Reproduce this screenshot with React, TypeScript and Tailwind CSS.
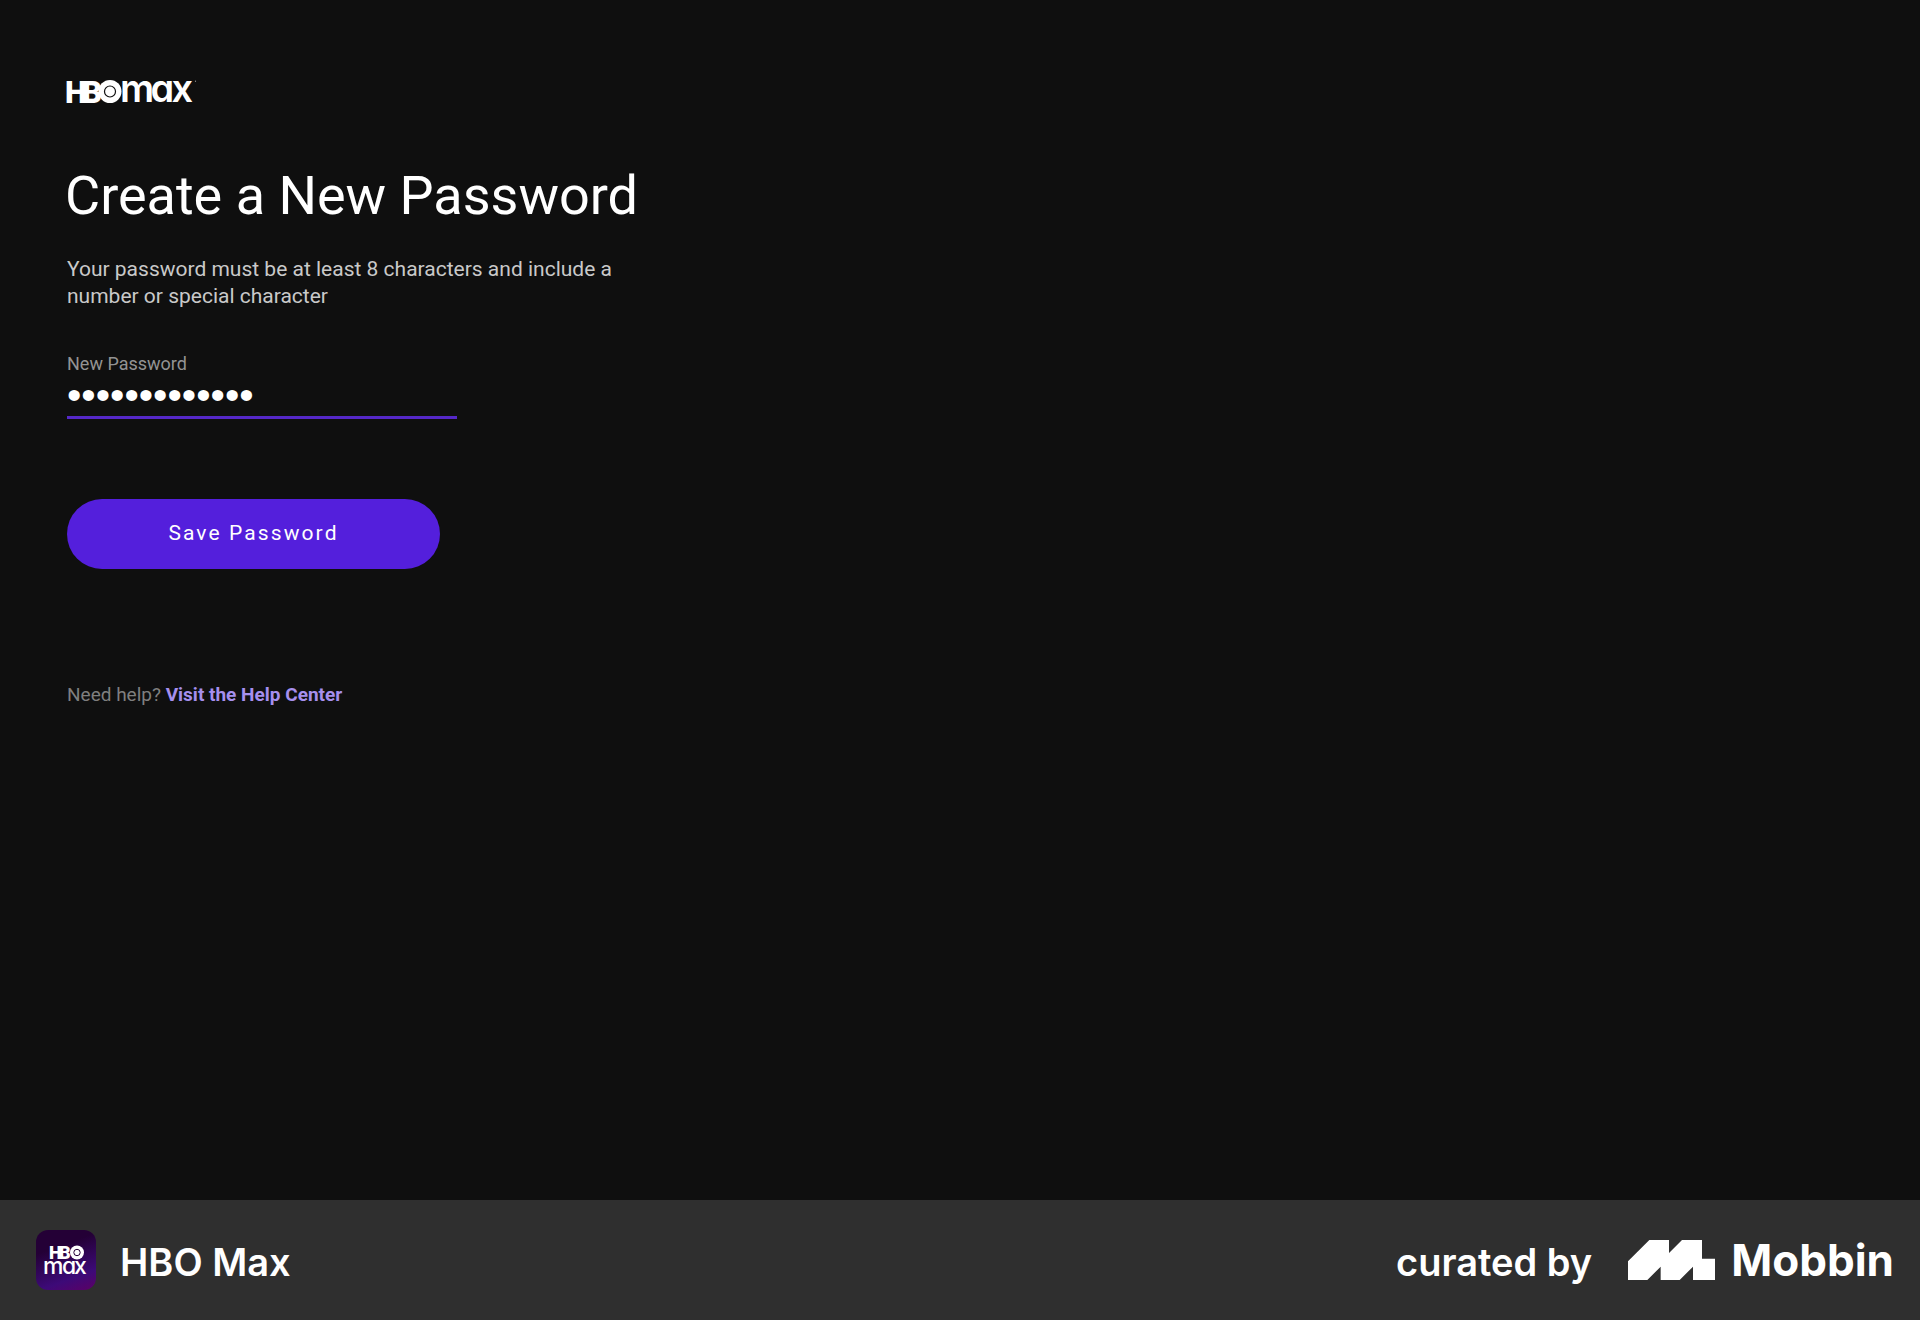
function HboMaxLogo() {
  return (
    <svg role="img" aria-label="HBO Max" viewBox="0 0 132 24" className="h-6 w-[132px] overflow-visible" fill="#fff">
      <g fontFamily="Roboto, sans-serif" fontWeight="900" fontSize="31">
        <text x="-2 15" y="22.5">HB</text>
      </g>
      <circle cx="43" cy="11.5" r="11.5" />
      <circle cx="43" cy="11.5" r="5.5" fill="none" stroke="#0f0f0f" strokeWidth="1.2" />
      <text
        x="53 83.5 104.5"
        y="22"
        fontFamily="Inter, sans-serif"
        fontWeight="600"
        fontSize="38"
        style={{ fontFeatureSettings: '"cv11"' }}
      >
        max
      </text>
      <circle cx="128.5" cy="1.2" r="0.6" opacity="0.6" />
    </svg>
  );
}

function AppIcon() {
  return (
    <div className="flex size-[60px] items-center justify-center rounded-xl bg-[linear-gradient(160deg,#240036_30%,#3d0a78_75%,#5c0066_100%)]">
      <svg role="img" aria-label="HBO Max app icon" viewBox="0 0 44 30" className="h-[30px] w-11 overflow-visible" fill="#fff">
        <text x="5 15" y="14" fontFamily="Roboto, sans-serif" fontWeight="900" fontSize="18">
          HB
        </text>
        <circle cx="33" cy="7.5" r="7" />
        <circle cx="33" cy="7.5" r="3.2" fill="none" stroke="#240036" strokeWidth="1" />
        <text
          x="-1 18 30"
          y="29"
          fontFamily="Inter, sans-serif"
          fontWeight="500"
          fontSize="23"
          style={{ fontFeatureSettings: '"cv11"' }}
        >
          max
        </text>
      </svg>
    </div>
  );
}

function MobbinMark() {
  return (
    <svg aria-hidden="true" viewBox="0 0 261 120" className="h-10 w-[87px]" fill="#fff">
      <path d="M0 64 64 0h59v39L162 0h60v56h39v64h-66V80l-40 40H98V80l-40 40H0Z" />
    </svg>
  );
}

export default function App() {
  return (
    <div className="flex min-h-screen flex-col bg-[#0f0f0f] font-['Roboto',sans-serif] text-white">
      <main className="flex-1 px-[67px] pt-20">
        <HboMaxLogo />

        <h1 className="-ml-0.5 mt-15 text-[54px] leading-16 font-normal">Create a New Password</h1>
        <p className="mt-7 max-w-[600px] text-[21px] leading-[27px] text-[#c9c9c9]">
          Your password must be at least 8 characters and include a number or special character
        </p>

        <form onSubmit={(e) => e.preventDefault()}>
          <div className="mt-[43px] flex w-full max-w-[390px] flex-col">
            <label htmlFor="new-password" className="text-lg leading-[22px] text-[#939393]">
              New Password
            </label>
            <input
              id="new-password"
              type="password"
              defaultValue="maxpassword12"
              className="h-11 w-full border-b-3 border-[#5528c8] bg-transparent p-0 font-['Liberation_Sans',sans-serif] text-[41px] leading-10 text-white outline-none"
            />
          </div>
          <button
            type="submit"
            className="mt-20 h-[70px] w-full max-w-[373px] rounded-full bg-[#541fdc] text-[21px] tracking-widest text-white"
          >
            Save Password
          </button>
        </form>

        <p className="mt-[115px] text-[19px] leading-[22px] text-[#7f7f7f]">
          Need help?{' '}
          <a href="#help" className="font-bold text-[#a68fee]">
            Visit the Help Center
          </a>
        </p>
      </main>

      <footer className="flex h-30 items-center justify-between bg-[#2f2f2f] pr-[26px] pl-9 font-['Inter',sans-serif]">
        <div className="flex items-center gap-6">
          <AppIcon />
          <span className="pt-1 text-[38px] leading-12 font-semibold">HBO Max</span>
        </div>
        <div className="flex items-center">
          <span className="pt-1 text-[38px] leading-12 font-semibold">curated by</span>
          <a href="#mobbin" className="ml-9 flex items-center gap-4">
            <MobbinMark />
            <span className="text-[44px] leading-12 font-bold">Mobbin</span>
          </a>
        </div>
      </footer>
    </div>
  );
}
